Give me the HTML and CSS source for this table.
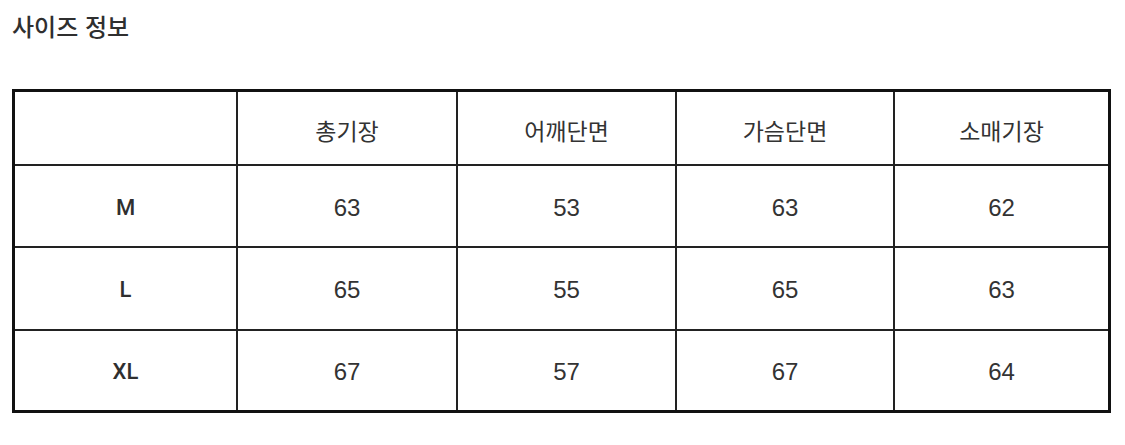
FILE: index.html
```html
<!DOCTYPE html>
<html lang="ko">
<head>
<meta charset="utf-8">
<link rel="stylesheet" href="styles.css">
</head>
<body>
<div class="page">
  <h2 class="title">사이즈 정보</h2>
  <table class="size-table">
    <colgroup>
      <col class="c1"><col class="c2"><col class="c3"><col class="c4"><col class="c5">
    </colgroup>
    <thead>
      <tr class="head">
        <th></th><th>총기장</th><th>어깨단면</th><th>가슴단면</th><th>소매기장</th>
      </tr>
    </thead>
    <tbody>
      <tr class="r1"><th>M</th><td>63</td><td>53</td><td>63</td><td>62</td></tr>
      <tr class="r2"><th>L</th><td>65</td><td>55</td><td>65</td><td>63</td></tr>
      <tr class="r3"><th>XL</th><td>67</td><td>57</td><td>67</td><td>64</td></tr>
    </tbody>
  </table>
</div>
</body>
</html>
```
FILE: styles.css
```css
html, body {
  margin: 0;
  padding: 0;
  background: #fff;
}
.page {
  display: flex;
  flex-direction: column;
  align-items: flex-start;
  padding: 12px 0 0 12px;
  font-family: "Noto Sans CJK KR", "Noto Sans", sans-serif;
  color: #333;
}
.title {
  margin: 0;
  font-size: 24px;
  line-height: 28px;
  font-weight: 500;
  color: #2f2f2f;
}
.size-table {
  margin-top: 49px;
  border: 3px solid #111;
  border-collapse: separate;
  border-spacing: 0;
  table-layout: fixed;
  width: 1099px;
}
.c1 { width: 223px; }
.c2 { width: 220px; }
.c3 { width: 219px; }
.c4 { width: 218px; }
.c5 { width: 213px; }
.size-table th,
.size-table td {
  padding: 0;
  text-align: center;
  vertical-align: middle;
  border-right: 2px solid #222;
  border-bottom: 2px solid #222;
  font-size: 23px;
  line-height: 28px;
  color: #333;
  font-weight: 400;
  font-family: "Noto Sans CJK KR", "Noto Sans", sans-serif;
}
.head > th { padding-top: 4px; }
.size-table tbody th,
.size-table tbody td { padding-top: 3px; }
.size-table tbody th {
  font-family: Roboto, "Liberation Sans", sans-serif;
  font-weight: 500;
  font-size: 22px;
  color: #2f2f2f;
}
.size-table tbody td {
  font-family: "Liberation Sans", "Noto Sans CJK KR", sans-serif;
  font-size: 24px;
  color: #333;
}
.size-table tr > :last-child { border-right: none; }
.size-table tbody tr:last-child > * { border-bottom: none; }
.head > * { height: 68px; }
.r1 > * { height: 77px; }
.r2 > * { height: 78px; }
.r3 > * { height: 76px; }
```
